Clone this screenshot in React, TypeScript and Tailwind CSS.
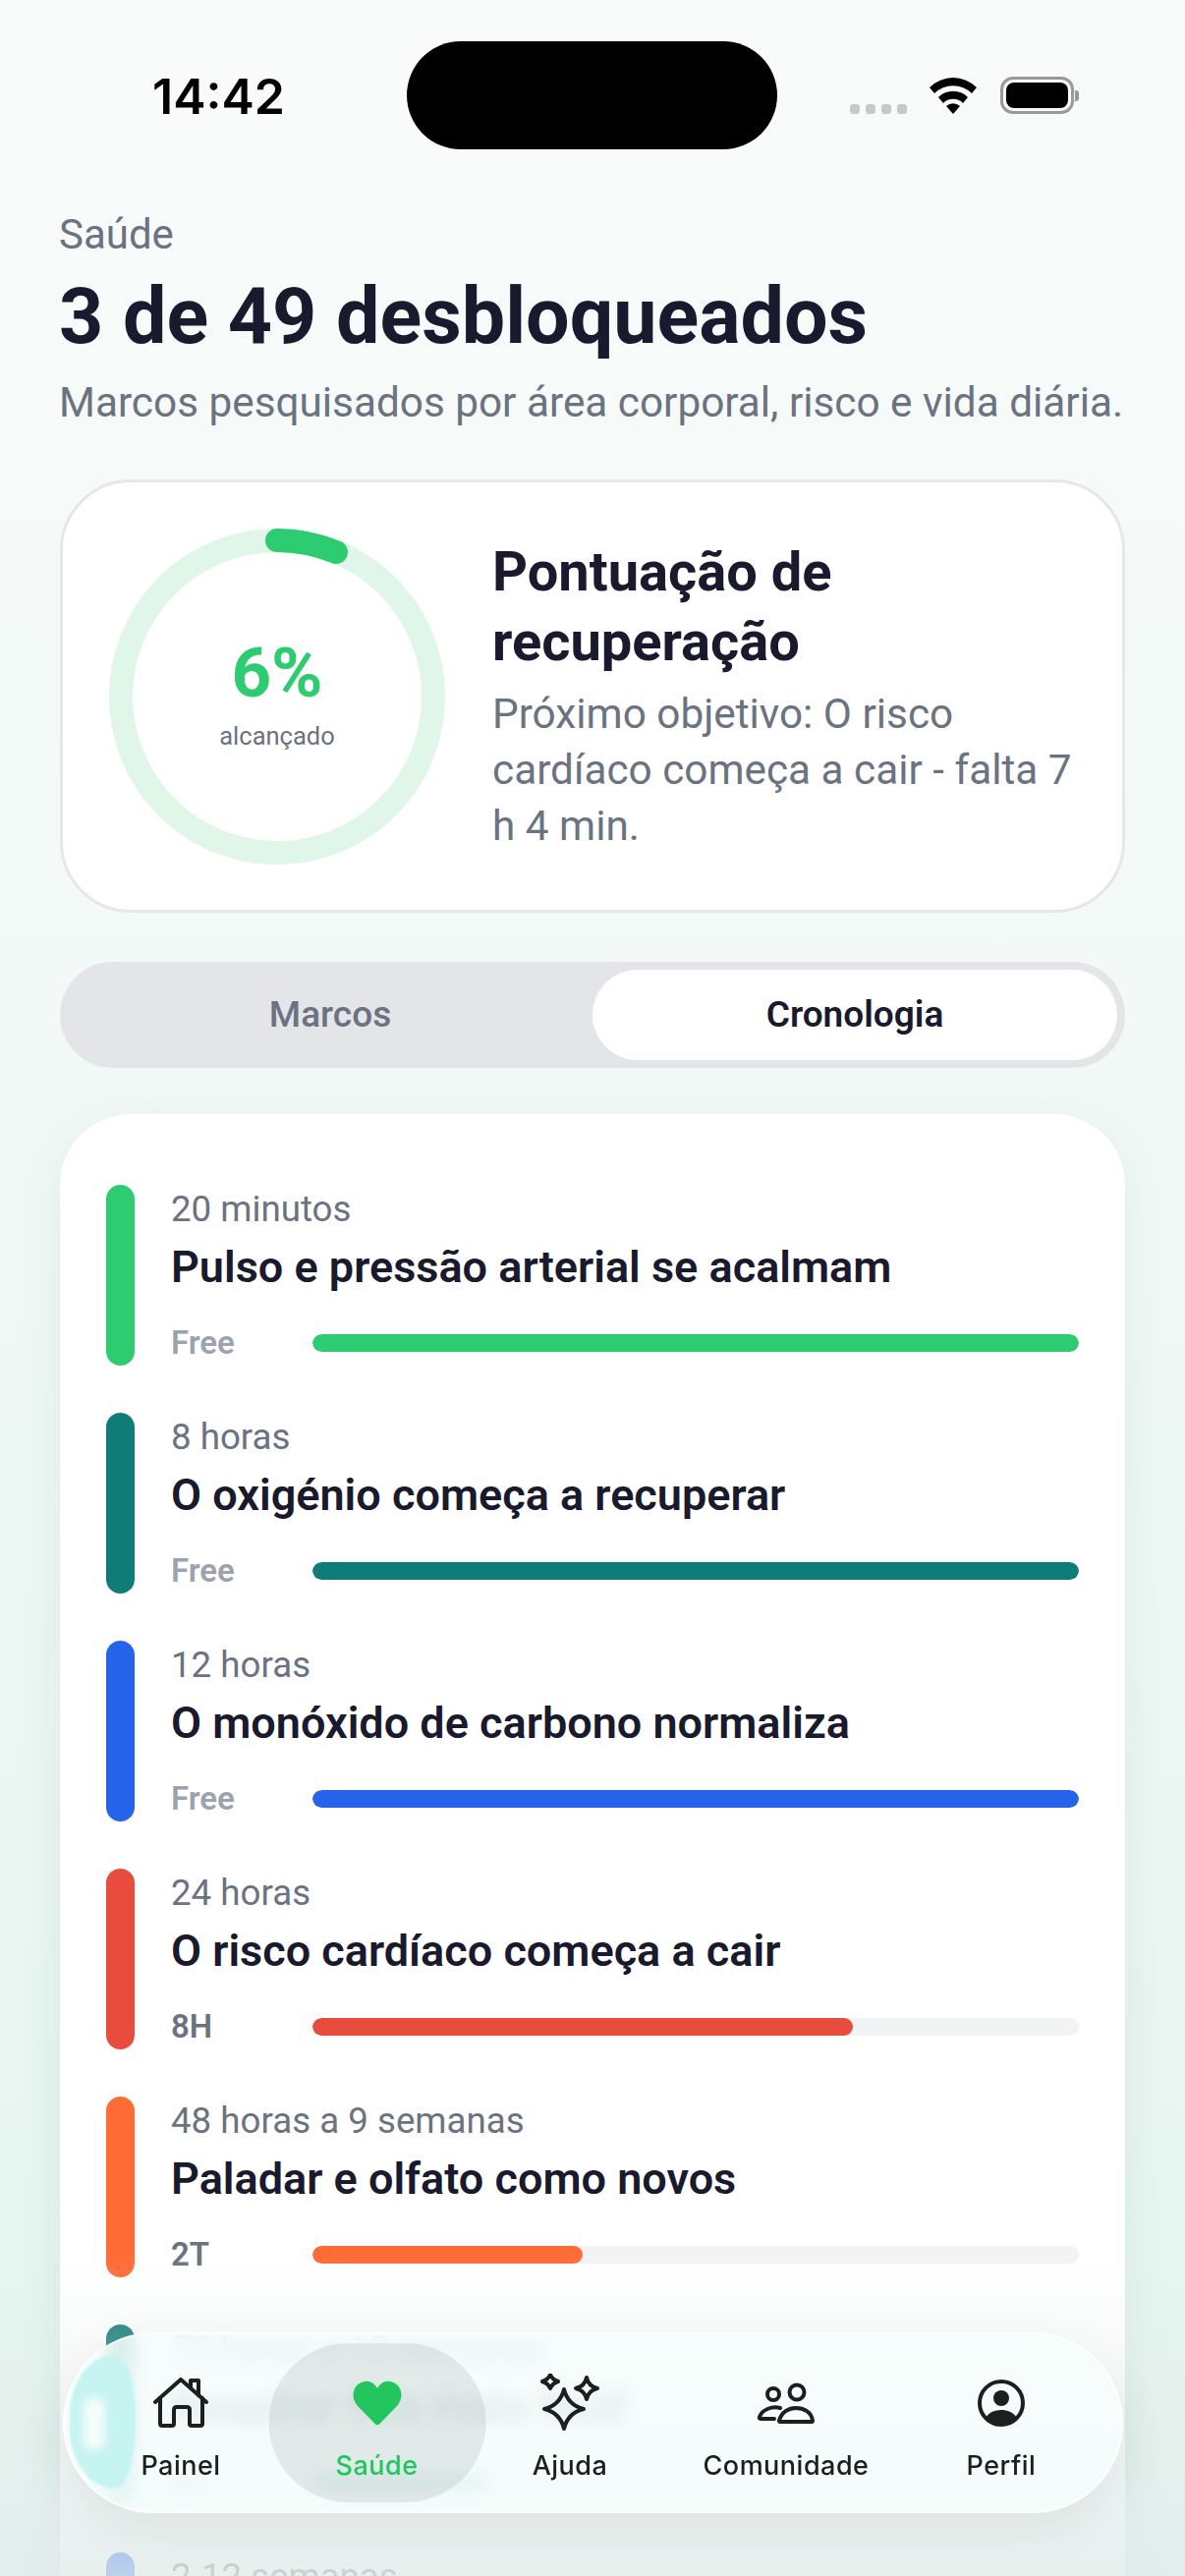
const rows = [
  { time: '20 minutos', title: 'Pulso e pressão arterial se acalmam', label: 'Free', color: 'bg-[#2ecc71]', fill: 'w-full', labelColor: 'text-[#9ca3af]' },
  { time: '8 horas', title: 'O oxigénio começa a recuperar', label: 'Free', color: 'bg-[#0f7c78]', fill: 'w-full', labelColor: 'text-[#9ca3af]' },
  { time: '12 horas', title: 'O monóxido de carbono normaliza', label: 'Free', color: 'bg-[#2563eb]', fill: 'w-full', labelColor: 'text-[#9ca3af]' },
  { time: '24 horas', title: 'O risco cardíaco começa a cair', label: '8H', color: 'bg-[#e74c3c]', fill: 'w-[70.5%]', labelColor: 'text-[#6b7280]' },
  { time: '48 horas a 9 semanas', title: 'Paladar e olfato como novos', label: '2T', color: 'bg-[#ff6b35]', fill: 'w-[35.2%]', labelColor: 'text-[#6b7280]' },
  { time: '72 horas a 12 semanas', title: 'Respirar fica mais fácil', label: '3T', color: 'bg-[#0f7c78]', fill: 'w-[23%]', labelColor: 'text-[#6b7280]' },
  { time: '2-12 semanas', title: 'A circulação melhora', label: '2S', color: 'bg-[#2563eb]', fill: 'w-[20%]', labelColor: 'text-[#6b7280]' },
];

function Ring() {
  return (
    <div className="relative w-[342px] h-[342px] shrink-0">
      <svg viewBox="0 0 342 342" className="w-full h-full">
        <circle cx="171" cy="171" r="159" fill="none" stroke="#dff6e8" strokeWidth="24" />
        <path d="M 171 12 A 159 159 0 0 1 231 24" fill="none" stroke="#2ecc71" strokeWidth="24" strokeLinecap="round" />
      </svg>
      <div className="absolute inset-0 flex flex-col items-center justify-center pb-[8px]">
        <span className="text-[71px] leading-[80px] font-bold text-[#2ecc71]">6%</span>
        <span className="text-[25.5px] leading-[32px] text-[#6b7280] mt-[8px]">alcançado</span>
      </div>
    </div>
  );
}

function HomeIcon() {
  return (
    <svg width="56" height="52" viewBox="0 0 56 52" fill="none" stroke="#1a1f1f" strokeWidth="4" strokeLinecap="round" strokeLinejoin="round">
      <path d="M2 25 L28 2 L54 25" />
      <path d="M38 10 V3 H46 V18" />
      <path d="M7 21 V47 Q7 49 9 49 H19 Q21 49 21 47 V33 Q21 30 24 30 H34 Q37 30 37 33 V47 Q37 49 39 49 H48 Q50 49 50 47 V21" />
    </svg>
  );
}

function HeartIcon() {
  return (
    <svg width="50" height="46" viewBox="0 0 50 46" fill="#22c55e">
      <path d="M23 44.5 L5 26 C-3 17 0 3 12 1 C18 0 22 3 25 8 C28 3 32 0 38 1 C50 3 53 17 45 26 L27 44.5 Q25 46 23 44.5 Z" />
    </svg>
  );
}

function SparklesIcon() {
  return (
    <svg width="62" height="60" viewBox="0 0 62 60" fill="none" stroke="#1a1f1f" strokeWidth="4" strokeLinejoin="round">
      <path d="M25 16 Q29 32 45 36 Q29 40 25 56 Q21 40 5 36 Q21 32 25 16 Z" />
      <path d="M11 1 Q13 6 19 8 Q13 10 11 15 Q9 10 3 8 Q9 6 11 1 Z" />
      <path d="M48 4 Q50 13 59 15 Q50 17 48 26 Q46 17 37 15 Q46 13 48 4 Z" />
    </svg>
  );
}

function PeopleIcon() {
  return (
    <svg width="64" height="48" viewBox="0 0 64 48" fill="none" stroke="#1a1f1f" strokeWidth="4" strokeLinecap="round" strokeLinejoin="round">
      <circle cx="43" cy="13" r="7.5" />
      <circle cx="19" cy="15" r="6" />
      <path d="M25 42 C27 33 35 29 42 29 C50 29 58 33 59 42 Q59 43 58 43 H26 Q25 43 25 42 Z" />
      <path d="M26 29 C18 27 8 30 5 38 Q4 40 7 40 H20" />
    </svg>
  );
}

function ProfileIcon() {
  return (
    <svg width="48" height="48" viewBox="0 0 48 48" fill="none">
      <circle cx="24" cy="24" r="22" stroke="#1a1f1f" strokeWidth="4" />
      <circle cx="24" cy="19" r="8" fill="#1a1f1f" />
      <path d="M8 39 C12 33 18 31 24 31 C30 31 36 33 40 39 A22 22 0 0 1 8 39 Z" fill="#1a1f1f" />
    </svg>
  );
}

const navItems = [
  { label: 'Painel', icon: <HomeIcon />, width: 'w-[198px]' },
  { label: 'Saúde', icon: <HeartIcon />, width: 'w-[201px]', active: true },
  { label: 'Ajuda', icon: <SparklesIcon />, width: 'w-[192px]' },
  { label: 'Comunidade', icon: <PeopleIcon />, width: 'w-[248px]' },
  { label: 'Perfil', icon: <ProfileIcon />, width: 'w-[190px]' },
];

export default function App() {
  return (
    <div className="relative w-[1206px] h-[2622px] overflow-hidden bg-gradient-to-b from-[#f9fbfb] via-[#f0f9f5] to-[#e4f4ef] font-['Roboto',sans-serif]">
      {/* Status bar */}
      <div className="relative h-[215px]">
        <div className="absolute left-[414px] top-[42px] w-[377px] h-[110px] rounded-[55px] bg-black" />
        <span className="absolute left-[155px] top-[70px] text-[50px] leading-[56px] font-semibold text-black font-['Inter',sans-serif]">14:42</span>
        <div className="absolute left-[865px] top-[106px] flex gap-[6px]">
          <div className="w-[10px] h-[10px] rounded-[3px] bg-[#c9c9c9]" />
          <div className="w-[10px] h-[10px] rounded-[3px] bg-[#c9c9c9]" />
          <div className="w-[10px] h-[10px] rounded-[3px] bg-[#c9c9c9]" />
          <div className="w-[10px] h-[10px] rounded-[3px] bg-[#c9c9c9]" />
        </div>
        <svg className="absolute left-[945px] top-[78px]" width="50" height="38" viewBox="0 0 50 38">
          <path d="M1 11 A34 34 0 0 1 49 11 L44 17 A27 27 0 0 0 6 17 Z" fill="#000" />
          <path d="M10 21 A21 21 0 0 1 40 21 L35 27 A14 14 0 0 0 15 27 Z" fill="#000" />
          <path d="M18 30 A10 10 0 0 1 32 30 L25 38 Z" fill="#000" />
        </svg>
        <div className="absolute left-[1018px] top-[78px] w-[75px] h-[38px] rounded-[13px] border-[3px] border-[#999] p-[3px]">
          <div className="w-full h-full rounded-[8px] bg-black" />
        </div>
        <div className="absolute left-[1094px] top-[92px] w-[4px] h-[11px] rounded-r-[3px] bg-[#999]" />
      </div>

      {/* Header */}
      <div className="px-[60px]">
        <p className="text-[42px] leading-[48px] text-[#6b7280]">Saúde</p>
        <h1 className="mt-[12px] text-[79px] leading-[94px] font-bold text-[#1a1a2e]">3 de 49 desbloqueados</h1>
        <p className="mt-[15px] text-[42.3px] leading-[52px] text-[#6b7280]">Marcos pesquisados por área corporal, risco e vida diária.</p>
      </div>

      <div className="mt-[52px] mx-[61px] flex flex-col">
        {/* Score card */}
        <div className="h-[441px] rounded-[72px] bg-white border-[3px] border-[#e5e7eb] flex items-center pl-[47px] pr-[48px] gap-[48px]">
          <Ring />
          <div className="flex-1">
            <h2 className="-mt-[2px] text-[56px] leading-[71px] font-bold text-[#1a1a2e]">Pontuação de recuperação</h2>
            <p className="mt-[9px] text-[42.3px] leading-[57px] text-[#6b7280]">Próximo objetivo: O risco cardíaco começa a cair - falta 7 h 4 min.</p>
          </div>
        </div>

        {/* Segment */}
        <div className="mt-[50px] h-[108px] rounded-[54px] bg-[#e3e5e9] flex p-[8px]">
          <div className="flex-1 flex items-center justify-center text-[37px] font-medium text-[#6b7280]">Marcos</div>
          <div className="flex-1 flex items-center justify-center rounded-[46px] bg-white text-[37px] font-semibold text-[#1a1a2e]">Cronologia</div>
        </div>

        {/* Timeline */}
        <div className="mt-[47px] rounded-[72px] bg-white shadow-[0_12px_48px_rgba(20,80,60,0.08)] pt-[72px] px-[47px] pb-[60px] flex flex-col gap-[48px]">
          {rows.map((row) => (
            <div key={row.title} className="flex gap-[37px] h-[184px]">
              <div className={`w-[29px] rounded-full ${row.color}`} />
              <div className="flex-1 flex flex-col pt-[3px]">
                <p className="text-[36.7px] leading-[44px] text-[#6b7280]">{row.time}</p>
                <p className="mt-[9px] text-[45px] leading-[56px] font-semibold text-[#1a1a2e]">{row.title}</p>
                <div className="mt-auto mb-[3px] flex items-center">
                  <span className={`w-[144px] text-[33px] leading-[40px] font-semibold ${row.labelColor}`}>{row.label}</span>
                  <div className="flex-1 h-[18px] rounded-full bg-[#f1f3f4] overflow-hidden">
                    <div className={`h-full rounded-full ${row.color} ${row.fill}`} />
                  </div>
                </div>
              </div>
            </div>
          ))}
        </div>
      </div>

      {/* Bottom fade */}
      <div className="absolute inset-x-0 bottom-0 h-[332px] bg-gradient-to-b from-[#e2ecea]/0 to-[#e2ecea]/80" />

      {/* Tab bar */}
      <div className="absolute left-[64px] top-[2374px] w-[1079px] h-[184px] rounded-[92px] border-[2px] border-white/80 bg-[#f6fefd]/85 backdrop-blur-[8px] shadow-[0_16px_48px_rgba(20,60,50,0.08)] flex items-start pl-[19px] pt-[40px]">
        <div className="absolute left-[5px] top-[21px] w-[67px] h-[136px] rounded-[50px_24px_24px_50px/68px] bg-[#c6f4f1] blur-[1px]" />
        <div className="absolute left-[19px] top-[64px] w-[22px] h-[54px] rounded-full bg-white/80 blur-[4px]" />
        {navItems.map((item) => (
          <div key={item.label} className={`relative flex flex-col items-center ${item.width}`}>
            {item.active && (
              <div className="absolute left-1/2 -translate-x-1/2 -top-[31px] w-[221px] h-[162px] rounded-[81px] bg-[#6b7f78]/15" />
            )}
            <div className="relative h-[60px] flex items-center justify-center">{item.icon}</div>
            <span className={`relative mt-[16px] text-[27px] leading-[36px] font-medium tracking-[0.5px] font-['Inter',sans-serif] ${item.active ? 'text-[#22c55e]' : 'text-[#1a1f1f]'}`}>
              {item.label}
            </span>
          </div>
        ))}
      </div>
    </div>
  );
}
